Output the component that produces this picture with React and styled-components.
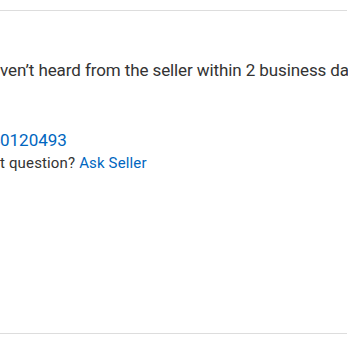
import React from "react";
import styled, { createGlobalStyle } from "styled-components";

const GlobalStyle = createGlobalStyle`
  html, body {
    margin: 0;
    padding: 0;
    background: #fff;
    overflow: hidden;
  }
  body {
    font-family: Roboto, "Liberation Sans", Arial, sans-serif;
    color: #333;
  }
`;

const Panel = styled.section`
  margin-top: 10px;
  width: 347px;
  height: 324px;
  border-top: 1px solid #ddd;
  border-bottom: 1px solid #ddd;
  box-sizing: border-box;
  display: flex;
  flex-direction: column;
`;

const Notice = styled.p`
  margin: 47px 0 0;
  font-size: 17px;
  letter-spacing: -0.1px;
  line-height: 24px;
  white-space: nowrap;
`;

/* the start of each line is cut off at the left edge of the view */
const Clipped = styled.span`
  display: inline-block;
  width: 0;
  direction: rtl;
  white-space: nowrap;
`;

const Info = styled.div`
  margin-top: 47px;
  display: flex;
  flex-direction: column;
  gap: 1px;
`;

const Line = styled.div`
  font-size: ${(p) => p.size}px;
  letter-spacing: ${(p) => p.spacing || 0}px;
  line-height: 22px;
  white-space: nowrap;
`;

const Link = styled.a`
  color: #0066c0;
  text-decoration: none;
  cursor: pointer;
`;

export default function App() {
  return (
    <>
      <GlobalStyle />
      <Panel>
        <Notice>
          <Clipped>If you ha</Clipped>ven’t heard from the seller within 2 business days, contact us.
        </Notice>
        <Info>
          <Line size={17}>
            <Clipped>Order # 114-624</Clipped>
            <Link>0120493</Link>
          </Line>
          <Line size={15} spacing={0.15}>
            <Clipped>Go</Clipped>t question? <Link>Ask Seller</Link>
          </Line>
        </Info>
      </Panel>
    </>
  );
}
